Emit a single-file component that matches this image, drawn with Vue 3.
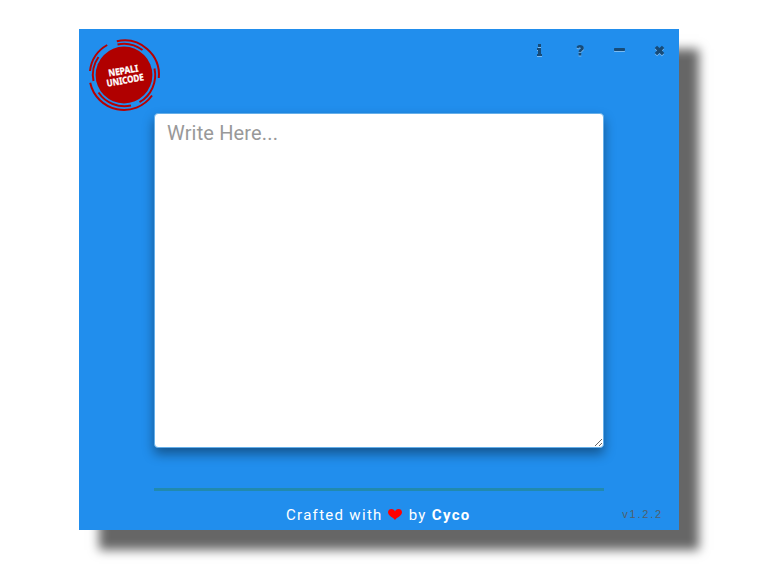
<script setup>
import { ref } from 'vue'
const text = ref('')
</script>

<template>
  <div class="page">
    <main class="window">
      <header class="top">
        <svg class="logo" viewBox="0 0 72 72" aria-label="Nepali Unicode">
          <g fill="none" stroke="#b80000" stroke-width="2">
            <path d="M2 32A34.5 34.5 0 0 1 19.2 6" />
            <path d="M28.8 2.3A34.5 34.5 0 0 1 70.8 39" />
            <path d="M2.2 43.8A34.5 34.5 0 0 0 64 56.5" />
            <path d="M5.5 42A31.3 31.3 0 0 1 10.5 18" />
            <path d="M29.5 5.4A31.3 31.3 0 0 1 54.5 11" />
            <path d="M66.5 29.5A31.3 31.3 0 0 1 51.5 63.2" />
            <path d="M10.5 53.5A31.3 31.3 0 0 0 43 66.5" />
          </g>
          <circle cx="36" cy="36" r="28.4" fill="#b00000" />
          <g transform="rotate(-10 36 36)" class="logo-text">
            <text x="36" y="35" textLength="30" lengthAdjust="spacingAndGlyphs">NEPALI</text>
            <text x="36.2" y="44.6" textLength="37.5" lengthAdjust="spacingAndGlyphs">UNICODE</text>
          </g>
        </svg>
        <nav class="controls">
          <button title="About"><svg viewBox="0 0 14 14"><path d="M5 1h3v3H5zM4 5h4v6h1v2H4v-2h1V7H4z" /></svg></button>
          <button title="Help"><svg viewBox="0 0 14 14"><path d="M5.6 10h2.7v2.6H5.6zM3.4 4.3C4.2 2.7 5.3 2 7 2c2 0 3.8 1.3 3.8 3.1 0 2.4-2.5 2.4-2.5 4.1H5.6c0-2.6 2.1-2.8 2.1-3.9 0-.6-.5-.9-1-.9-.7 0-1 .4-1.5 1.1z" /></svg></button>
          <button title="Minimize"><svg viewBox="0 0 14 14"><rect x="1" y="5" width="11" height="3" rx=".7" /></svg></button>
          <button title="Close"><svg viewBox="0 0 14 14"><path d="M4.1 2.7 6.5 5.1l2.4-2.4 2.4 2.4L8.9 7.5l2.4 2.4-2.4 2.4-2.4-2.4-2.4 2.4-2.4-2.4 2.4-2.4-2.4-2.4z" /></svg></button>
        </nav>
      </header>
      <textarea v-model="text" class="editor" placeholder="Write Here..." spellcheck="false"></textarea>
      <hr class="rule" />
      <footer class="footer">
        <span class="credit">Crafted with
          <svg class="heart" viewBox="0 0 14 11"><path d="M7 11C5.8 8.8 0 7.2 0 3.3 0 1.2 1.5 0 3.5 0 5.3 0 6.5 1 7 2.5 7.5 1 8.7 0 10.5 0 12.5 0 14 1.2 14 3.3 14 7.2 8.2 8.8 7 11z" fill="#f00" /></svg>
          by <b>Cyco</b></span>
        <span class="version">v1.2.2</span>
      </footer>
    </main>
  </div>
</template>

<style>
body { margin: 0; background: #fff; }
</style>

<style scoped>
.page { padding: 29px 80px 34px 79px; }
.window {
  box-sizing: border-box;
  width: 600px;
  height: 501px;
  display: flex;
  flex-direction: column;
  background: #218eed;
  box-shadow: 20px 20px 10px rgba(0, 0, 0, .6);
  font-family: Roboto, sans-serif;
}
.top {
  height: 84px;
  flex: none;
  display: flex;
  justify-content: space-between;
  align-items: flex-start;
  padding: 10px 12px 0 9px;
  box-sizing: border-box;
}
.logo { width: 72px; height: 72px; overflow: visible; }
.logo-text {
  font: 700 9.5px "Noto Sans", sans-serif;
  fill: #fff;
  stroke: #fff;
  stroke-width: .3;
  text-anchor: middle;
}
.controls { display: flex; gap: 26px; padding-top: 4px; }
.controls button {
  width: 14px;
  height: 14px;
  padding: 0;
  border: 0;
  background: none;
}
.controls svg {
  display: block;
  width: 14px;
  height: 14px;
  fill: #174b78;
  filter: drop-shadow(0 1px 0 rgba(255, 255, 255, .4));
}
.editor {
  box-sizing: border-box;
  width: 450px;
  height: 335px;
  flex: none;
  margin: 0 auto 0 75px;
  padding: 6px 12px;
  border: 1px solid #66afe9;
  border-radius: 4px;
  outline: 0;
  resize: both;
  background: #fff;
  color: #555;
  box-shadow: 0 6px 12px rgba(0, 0, 0, .4);
  font: 20px/26px Roboto, sans-serif;
  letter-spacing: .15px;
}
.editor::placeholder { color: #999; opacity: 1; }
.rule {
  width: 450px;
  height: 3px;
  flex: none;
  margin: 40px auto 0 75px;
  border: 0;
  background: #218aae;
}
.footer {
  display: grid;
  grid-template-columns: 1fr;
  align-items: center;
  height: 39px;
  padding: 9px 16px 0 0;
  box-sizing: border-box;
}
.credit, .version { grid-area: 1 / 1; white-space: nowrap; }
.credit {
  padding: 0 0 1px 207px;
  font-size: 15px;
  line-height: 20px;
  letter-spacing: 1.3px;
  color: #fff;
}
.heart { width: 14px; height: 11px; margin-right: 2px; }
.version {
  justify-self: end;
  padding-bottom: 2px;
  font: 11px/16px "Liberation Sans", sans-serif;
  letter-spacing: 1.8px;
  color: #50606c;
}
</style>
